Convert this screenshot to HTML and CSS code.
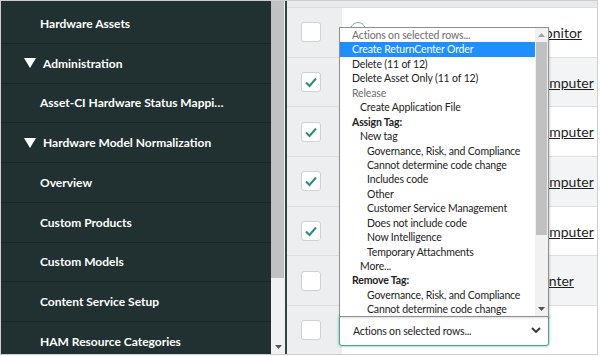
FILE: index.html
```html
<!DOCTYPE html>
<html>
<head>
<meta charset="utf-8">
<link rel="stylesheet" href="styles.css">
</head>
<body>
<div class="frame">
  <nav class="sidebar">
    <ul class="nav-list">
      <li class="nav-item">Hardware Assets</li>
      <li class="nav-item nav-group"><svg class="caret" width="12" height="10" viewBox="0 0 12 10"><polygon points="0,0 12,0 6,10" fill="#fff"/></svg>Administration</li>
      <li class="nav-item">Asset-CI Hardware Status Mappi…</li>
      <li class="nav-item nav-group"><svg class="caret" width="12" height="10" viewBox="0 0 12 10"><polygon points="0,0 12,0 6,10" fill="#fff"/></svg>Hardware Model Normalization</li>
      <li class="nav-item">Overview</li>
      <li class="nav-item">Custom Products</li>
      <li class="nav-item">Custom Models</li>
      <li class="nav-item">Content Service Setup</li>
      <li class="nav-item">HAM Resource Categories</li>
    </ul>
  </nav>
  <div class="side-scroll">
    <div class="side-thumb"></div>
    <div class="side-track"><svg width="7" height="4" viewBox="0 0 7 4"><polygon points="0,0 7,0 3.5,4" fill="#555"/></svg></div>
  </div>
  <div class="divider"></div>
  <main class="content">
    <div class="header-strip"></div>
    <div class="rows">
      <div class="row">
        <div class="check-cell"><span class="checkbox"></span></div>
        <div class="data-cell"><span class="info-icon"></span><a class="rec-link">Monitor</a></div>
      </div>
      <div class="row row-alt">
        <div class="check-cell"><span class="checkbox"><svg width="14" height="12" viewBox="0 0 14 12"><path d="M2 6.5 L5.5 10 L12 2.5" fill="none" stroke="#2f8a80" stroke-width="2"/></svg></span></div>
        <div class="data-cell"><a class="rec-link">Computer</a></div>
      </div>
      <div class="row">
        <div class="check-cell"><span class="checkbox"><svg width="14" height="12" viewBox="0 0 14 12"><path d="M2 6.5 L5.5 10 L12 2.5" fill="none" stroke="#2f8a80" stroke-width="2"/></svg></span></div>
        <div class="data-cell"><a class="rec-link">Computer</a></div>
      </div>
      <div class="row row-alt">
        <div class="check-cell"><span class="checkbox"><svg width="14" height="12" viewBox="0 0 14 12"><path d="M2 6.5 L5.5 10 L12 2.5" fill="none" stroke="#2f8a80" stroke-width="2"/></svg></span></div>
        <div class="data-cell"><a class="rec-link">Computer</a></div>
      </div>
      <div class="row">
        <div class="check-cell"><span class="checkbox"><svg width="14" height="12" viewBox="0 0 14 12"><path d="M2 6.5 L5.5 10 L12 2.5" fill="none" stroke="#2f8a80" stroke-width="2"/></svg></span></div>
        <div class="data-cell"><a class="rec-link">Computer</a></div>
      </div>
      <div class="row row-alt">
        <div class="check-cell"><span class="checkbox"></span></div>
        <div class="data-cell"><a class="rec-link">Printer</a></div>
      </div>
      <div class="row row-last">
        <div class="check-cell"><span class="checkbox"></span></div>
        <div class="data-cell">
          <div class="select-box"><span>Actions on selected rows...</span><svg width="10" height="7" viewBox="0 0 10 7"><path d="M1 1 L5 5 L9 1" fill="none" stroke="#333" stroke-width="1.8"/></svg></div>
        </div>
      </div>
    </div>
    <div class="listbox">
      <ul class="options">
        <li class="opt opt-muted">Actions on selected rows...</li>
        <li class="opt opt-selected">Create ReturnCenter Order</li>
        <li class="opt">Delete (11 of 12)</li>
        <li class="opt">Delete Asset Only (11 of 12)</li>
        <li class="opt opt-muted">Release</li>
        <li class="opt lvl1">Create Application File</li>
        <li class="opt opt-group">Assign Tag:</li>
        <li class="opt lvl1">New tag</li>
        <li class="opt lvl2">Governance, Risk, and Compliance</li>
        <li class="opt lvl2">Cannot determine code change</li>
        <li class="opt lvl2">Includes code</li>
        <li class="opt lvl2">Other</li>
        <li class="opt lvl2">Customer Service Management</li>
        <li class="opt lvl2">Does not include code</li>
        <li class="opt lvl2">Now Intelligence</li>
        <li class="opt lvl2">Temporary Attachments</li>
        <li class="opt lvl1">More...</li>
        <li class="opt opt-group">Remove Tag:</li>
        <li class="opt lvl2">Governance, Risk, and Compliance</li>
        <li class="opt lvl2">Cannot determine code change</li>
      </ul>
      <div class="list-scroll">
        <div class="ls-arrow"><svg width="7" height="4" viewBox="0 0 7 4"><polygon points="0,4 7,4 3.5,0" fill="#a0a0a0"/></svg></div>
        <div class="ls-thumb"></div>
        <div class="ls-track"></div>
        <div class="ls-arrow"><svg width="7" height="4" viewBox="0 0 7 4"><polygon points="0,0 7,0 3.5,4" fill="#505050"/></svg></div>
      </div>
    </div>
  </main>
</div>
</body>
</html>
```

FILE: styles.css
```css
* { box-sizing: border-box; }
html, body { margin: 0; padding: 0; background: #fff; }
body { font-family: Lato, "Open Sans", sans-serif; }

.frame {
  width: 598px;
  height: 355px;
  border: 1px solid #cfcfcf;
  display: flex;
  overflow: hidden;
}

.sidebar {
  width: 270px;
  background: #213030;
  overflow: hidden;
}
.nav-list {
  list-style: none;
  margin: 0;
  padding: 3px 0 0;
}
.nav-item {
  height: 39.75px;
  border-bottom: 1px solid #1a2627;
  color: #fff;
  font-weight: 700;
  font-size: 12px;
  display: flex;
  align-items: center;
  padding-left: 39px;
  white-space: nowrap;
}
.nav-group { padding-left: 23px; }
.caret { margin-right: 7px; flex: none; }

.side-scroll {
  width: 14px;
  display: flex;
  flex-direction: column;
  background: #f1f1f1;
}
.side-thumb {
  height: 277px;
  background: #c1c1c1;
  margin: 0 1px 0 0;
}
.side-track {
  flex: 1;
  display: flex;
  align-items: flex-end;
  justify-content: center;
  padding-bottom: 5px;
}

.divider {
  width: 2px;
  background: #2d4843;
}

.content {
  flex: 1;
  position: relative;
  background: #fff;
  display: flex;
  flex-direction: column;
}
.header-strip {
  height: 7px;
  background: #e8eaeb;
  border-bottom: 1px solid #dcdcdc;
}
.rows { flex: 1; display: flex; flex-direction: column; }
.row {
  height: 49.7px;
  display: flex;
  border-bottom: 1px solid #dedede;
  background: #fff;
}
.row-alt { background: #f3f4f5; }
.row-last { border-bottom: none; flex: 1; }
.check-cell {
  width: 55px;
  background: #eceeef;
  display: flex;
  align-items: center;
  padding-left: 14px;
}
.checkbox {
  width: 20px;
  height: 20px;
  background: #fff;
  border: 1px solid #cfd1d2;
  border-radius: 3px;
  display: flex;
  align-items: center;
  justify-content: center;
}
.data-cell {
  flex: 1;
  display: flex;
  align-items: center;
  padding-left: 190px;
  position: relative;
}
.rec-link {
  color: #1e1e1e;
  text-decoration: underline;
  font-size: 14px;
}
.info-icon {
  position: absolute;
  left: 8px;
  top: 14px;
  width: 16px;
  height: 16px;
  border: 1.5px solid #8aa7a0;
  border-radius: 50%;
}
.select-box {
  position: absolute;
  left: -3px;
  top: 9px;
  width: 210px;
  height: 31px;
  border: 1px solid #4d9f8f;
  border-radius: 3px;
  box-shadow: 0 0 2px 1px rgba(90,170,150,0.45);
  background: #fff;
  display: flex;
  align-items: center;
  justify-content: space-between;
  padding: 0 7px 0 13px;
  font-size: 10.5px;
  letter-spacing: -0.15px;
  color: #222;
}

.listbox {
  position: absolute;
  left: 52px;
  top: 26px;
  width: 210px;
  height: 290px;
  background: #fff;
  border: 1px solid #8e8e8e;
  display: flex;
  box-shadow: 1px 1px 2px rgba(0,0,0,0.15);
}
.options {
  list-style: none;
  margin: 0;
  padding: 0;
  flex: 1;
  font-size: 10.5px;
  letter-spacing: -0.15px;
  color: #222;
}
.opt {
  height: 14.45px;
  line-height: 14.45px;
  padding-left: 12px;
  white-space: nowrap;
}
.opt-muted { color: #6e6e6e; }
.opt-selected { background: #1e8fff; color: #fff; }
.opt-group { font-weight: 700; }
.lvl1 { padding-left: 20px; }
.lvl2 { padding-left: 27px; }

.list-scroll {
  width: 13px;
  display: flex;
  flex-direction: column;
  background: #f1f1f1;
}
.ls-arrow {
  height: 14px;
  display: flex;
  align-items: center;
  justify-content: center;
}
.ls-thumb {
  height: 193px;
  background: #c1c1c1;
  margin: 0 1px;
}
.ls-track { flex: 1; }
```
